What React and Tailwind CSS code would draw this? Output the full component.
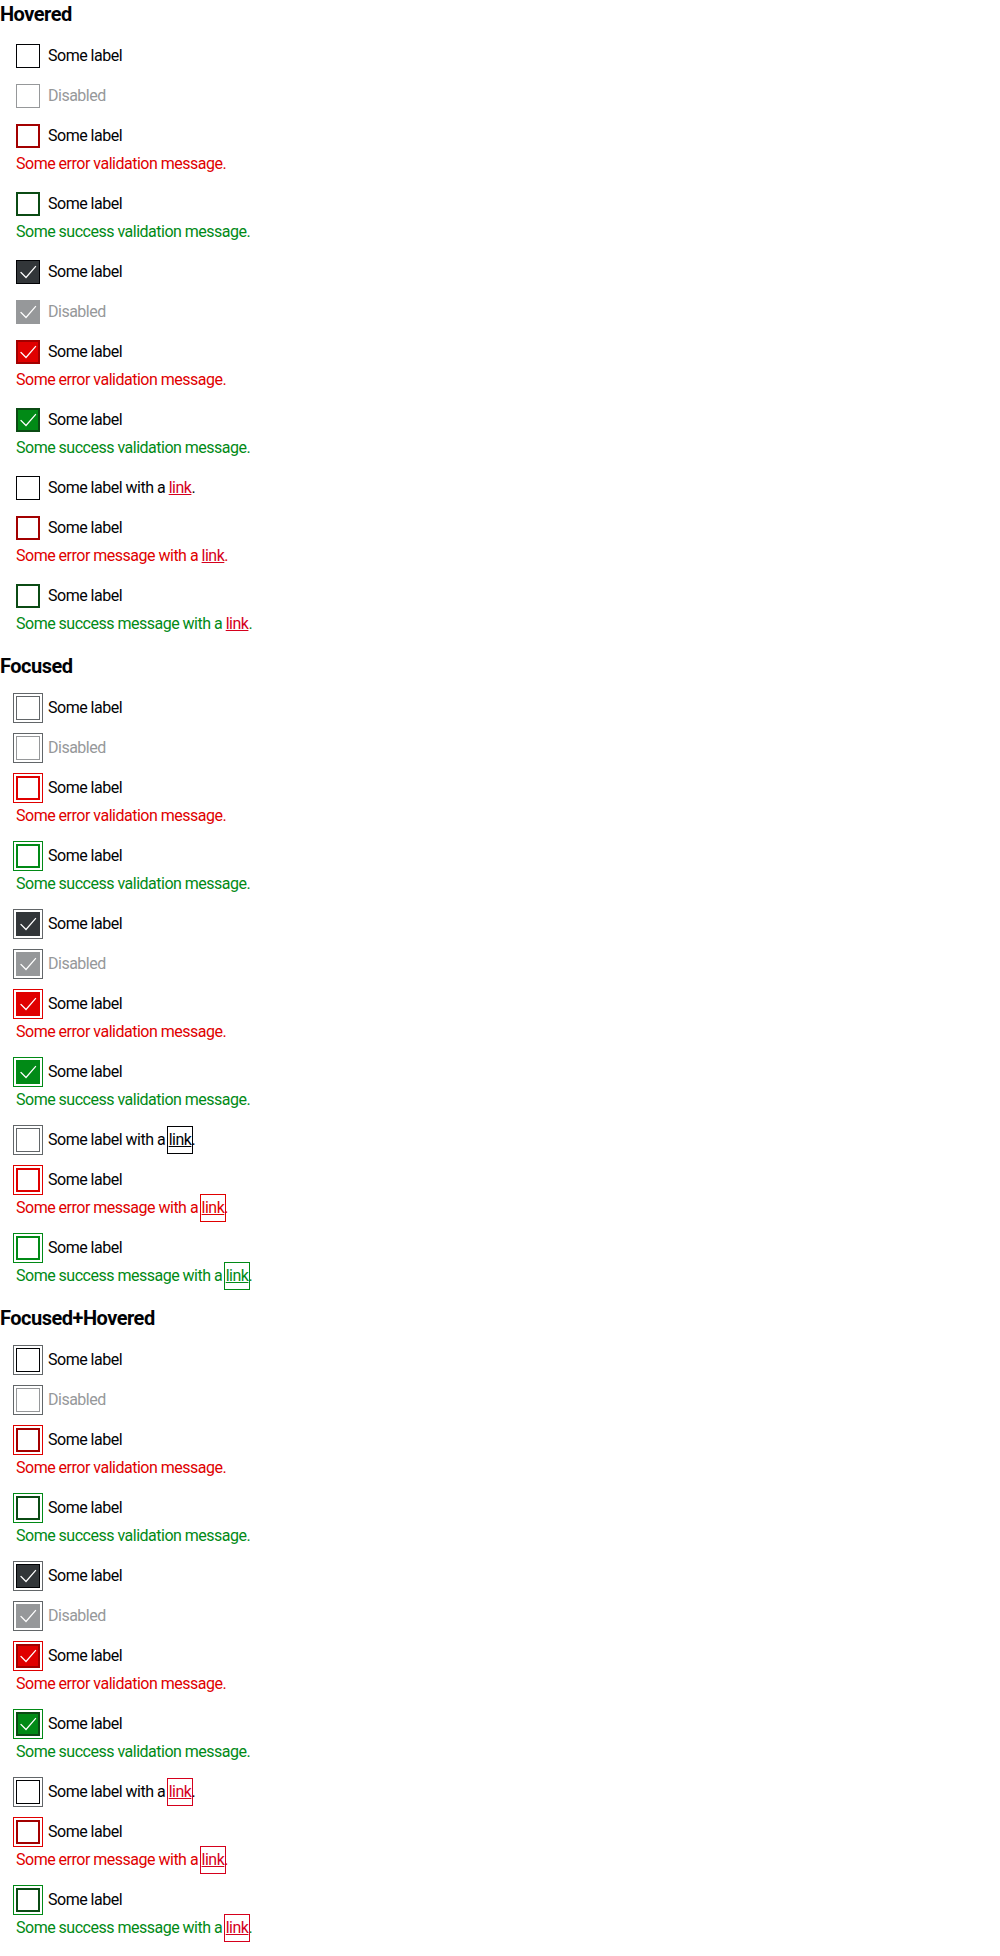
import React from "react";

const BOX = {
  hover: {
    default: "border border-[#010205] bg-white",
    disabled: "border border-[#96989a] bg-white",
    error: "border-2 border-[#a30000] bg-white",
    success: "border-2 border-[#0b4b14] bg-white",
    cdefault: "border border-[#010205] bg-[#323639]",
    cdisabled: "border border-[#96989a] bg-[#96989a]",
    cerror: "border-2 border-[#a30000] bg-[#e00000]",
    csuccess: "border-2 border-[#0b4b14] bg-[#018a16]",
  },
  focus: {
    default: "border border-[#626669] bg-white",
    disabled: "border border-[#96989a] bg-white",
    error: "border-2 border-[#e00000] bg-white",
    success: "border-2 border-[#018a16] bg-white",
    cdefault: "border border-[#323639] bg-[#323639]",
    cdisabled: "border border-[#96989a] bg-[#96989a]",
    cerror: "border-2 border-[#e00000] bg-[#e00000]",
    csuccess: "border-2 border-[#018a16] bg-[#018a16]",
  },
  focushover: {
    default: "border border-[#010205] bg-white",
    disabled: "border border-[#96989a] bg-white",
    error: "border-2 border-[#a30000] bg-white",
    success: "border-2 border-[#0b4b14] bg-white",
    cdefault: "border border-[#010205] bg-[#323639]",
    cdisabled: "border border-[#96989a] bg-[#96989a]",
    cerror: "border-2 border-[#a30000] bg-[#e00000]",
    csuccess: "border-2 border-[#0b4b14] bg-[#018a16]",
  },
};

const RING = {
  default: "outline outline-1 outline-offset-2 outline-[#626669]",
  disabled: "outline outline-1 outline-offset-2 outline-[#626669]",
  error: "outline outline-1 outline-offset-2 outline-[#e00000]",
  success: "outline outline-1 outline-offset-2 outline-[#018a16]",
};

const LINK = {
  hover: {
    label: "text-[#d5001c] underline",
    error: "text-[#d5001c] underline",
    success: "text-[#d5001c] underline",
  },
  focus: {
    label: "text-[#010205] underline inline-block leading-6 outline outline-1 outline-offset-1 outline-[#010205]",
    error: "text-[#e00000] underline inline-block leading-6 outline outline-1 outline-offset-1 outline-[#e00000]",
    success: "text-[#018a16] underline inline-block leading-6 outline outline-1 outline-offset-1 outline-[#018a16]",
  },
  focushover: {
    label: "text-[#d5001c] underline inline-block leading-6 outline outline-1 outline-offset-1 outline-[#d5001c]",
    error: "text-[#d5001c] underline inline-block leading-6 outline outline-1 outline-offset-1 outline-[#d5001c]",
    success: "text-[#d5001c] underline inline-block leading-6 outline outline-1 outline-offset-1 outline-[#d5001c]",
  },
};

function Check() {
  return (
    <svg className="absolute inset-0 w-6 h-6" viewBox="0 0 24 24" fill="none">
      <polyline points="5,12.5 10,17.5 19.5,6.5" stroke="#ffffff" strokeWidth="1.2" strokeLinecap="square" />
    </svg>
  );
}

function Box({ mode, state, checked }) {
  const key = (checked ? "c" : "") + state;
  const ring = mode === "hover" ? "" : RING[state];
  return (
    <div className={"relative w-6 h-6 shrink-0 " + ring}>
      <div className={"absolute inset-0 box-border " + BOX[mode][key]} />
      {checked && <Check />}
    </div>
  );
}

function Link({ mode, kind }) {
  return <a className={LINK[mode][kind]}>link</a>;
}

function Item({ mode, state, checked, label, message, linkLabel, linkMessage }) {
  const labelColor = state === "disabled" ? "text-[#96989a]" : "text-[#010205]";
  const msgColor = state === "error" ? "text-[#e00000]" : "text-[#018a16]";
  return (
    <div className="flex flex-col">
      <div className="flex items-center gap-2 h-6">
        <Box mode={mode} state={state} checked={checked} />
        <span className={"text-[16px] leading-6 tracking-[-0.5px] " + labelColor}>
          {linkLabel ? (
            <>
              Some label with a <Link mode={mode} kind="label" />.
            </>
          ) : (
            label
          )}
        </span>
      </div>
      {message && (
        <div className={"mt-1 text-[16px] leading-6 tracking-[-0.5px] " + msgColor}>
          {linkMessage ? (
            <>
              {message} <Link mode={mode} kind={state} />.
            </>
          ) : (
            message
          )}
        </div>
      )}
    </div>
  );
}

const ITEMS = [
  { state: "default", checked: false, label: "Some label" },
  { state: "disabled", checked: false, label: "Disabled" },
  { state: "error", checked: false, label: "Some label", message: "Some error validation message." },
  { state: "success", checked: false, label: "Some label", message: "Some success validation message." },
  { state: "default", checked: true, label: "Some label" },
  { state: "disabled", checked: true, label: "Disabled" },
  { state: "error", checked: true, label: "Some label", message: "Some error validation message." },
  { state: "success", checked: true, label: "Some label", message: "Some success validation message." },
  { state: "default", checked: false, linkLabel: true },
  { state: "error", checked: false, label: "Some label", message: "Some error message with a", linkMessage: true },
  { state: "success", checked: false, label: "Some label", message: "Some success message with a", linkMessage: true },
];

function Section({ title, mode }) {
  return (
    <section className="flex flex-col gap-4">
      <h2 className="text-[20px] leading-7 font-bold text-[#010205] tracking-[-0.5px]">{title}</h2>
      <div className="flex flex-col gap-4 pl-4">
        {ITEMS.map((it, i) => (
          <Item key={i} mode={mode} {...it} />
        ))}
      </div>
    </section>
  );
}

export default function App() {
  return (
    <div
      className="w-[1000px] min-h-[1956px] bg-white flex flex-col gap-4"
      style={{ fontFamily: "Roboto, 'Liberation Sans', sans-serif" }}
    >
      <Section title="Hovered" mode="hover" />
      <Section title="Focused" mode="focus" />
      <Section title="Focused+Hovered" mode="focushover" />
    </div>
  );
}
